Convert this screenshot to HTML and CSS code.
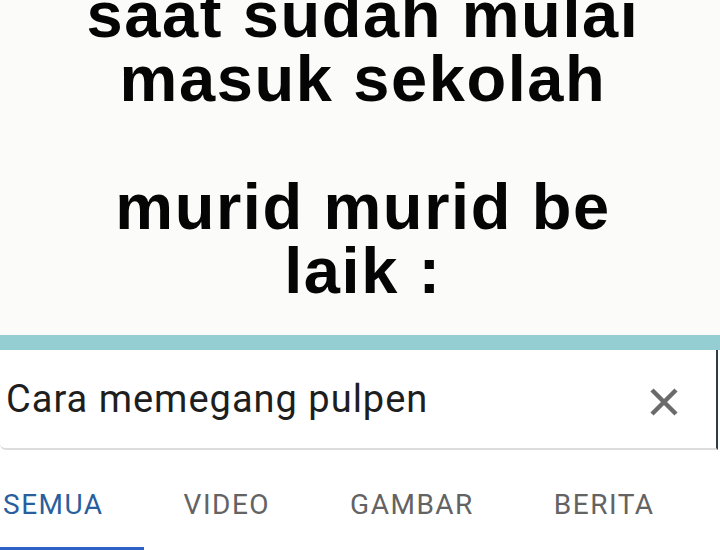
FILE: index.html
```html
<!DOCTYPE html>
<html lang="id">
<head>
  <meta charset="UTF-8" />
  <title>murid murid be laik</title>
  <link rel="stylesheet" href="styles.css">
</head>
<body>

  <div class="meme">
    <p class="caption">saat sudah mulai<br>masuk sekolah<br><br>murid murid be<br>laik :</p>
  </div>

  <div class="appbar"></div>

  <div class="search">
    <span class="query">Cara memegang pulpen</span>
    <svg class="clear" width="30" height="30" viewBox="0 0 30 30">
      <path d="M3 3 L27 27 M27 3 L3 27" stroke="#6b6b6b" stroke-width="4.5" fill="none"/>
    </svg>
  </div>

  <nav class="tabs">
    <span class="tab active">SEMUA</span>
    <span class="tab">VIDEO</span>
    <span class="tab">GAMBAR</span>
    <span class="tab">BERITA</span>
  </nav>

</body>
</html>
```

FILE: styles.css
```css
body { margin: 0; background: #fff; overflow: hidden; }

.meme { height: 335px; background: #fbfbf9; overflow: hidden; }
.caption {
  margin: -17px 0 0;
  padding-left: 6px;
  text-align: center;
  font-family: "Liberation Sans", Arial, sans-serif;
  font-weight: bold;
  font-size: 65px;
  line-height: 64px;
  letter-spacing: 1.6px;
  color: #050505;
}

.appbar { height: 15px; background: #94ced2; }

.search {
  height: 98px;
  margin-right: 2px;
  display: flex;
  align-items: center;
  justify-content: space-between;
  background: #fff;
  border-bottom: 2px solid #dcdcdc;
  border-right: 2px solid #2e3b48;
  border-bottom-left-radius: 6px;
}
.query {
  padding-left: 6px;
  font-family: Roboto, sans-serif;
  font-size: 38px;
  letter-spacing: 1px;
  color: #1e1e1e;
}
.clear { margin: 6px 37px 0 0; }

.tabs { display: flex; margin-left: -37px; }
.tab {
  padding: 38px 40px 26px;
  border-bottom: 3px solid transparent;
  font-family: Roboto, sans-serif;
  font-size: 28px;
  letter-spacing: 1.5px;
  color: #636363;
}
.tab.active { color: #2a5f9e; border-bottom-color: #2f62c8; }
```
